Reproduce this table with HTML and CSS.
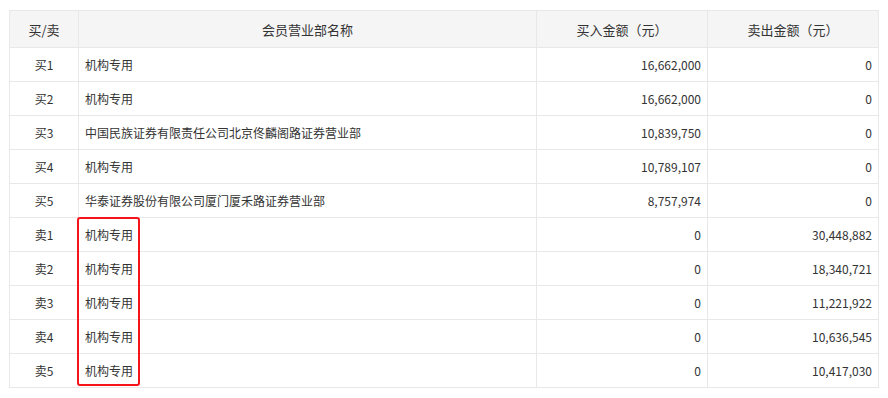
FILE: index.html
```html
<!DOCTYPE html>
<html lang="zh">
<head>
<meta charset="utf-8">
<link rel="stylesheet" href="styles.css">
</head>
<body>
<div class="wrap">
  <table class="grid">
    <colgroup>
      <col class="c1"><col class="c2"><col class="c3"><col class="c4">
    </colgroup>
    <thead>
      <tr><th>买/卖</th><th>会员营业部名称</th><th>买入金额（元）</th><th>卖出金额（元）</th></tr>
    </thead>
    <tbody>
      <tr><td class="side">买1</td><td class="name">机构专用</td><td class="num">16,662,000</td><td class="num">0</td></tr>
      <tr><td class="side">买2</td><td class="name">机构专用</td><td class="num">16,662,000</td><td class="num">0</td></tr>
      <tr><td class="side">买3</td><td class="name">中国民族证券有限责任公司北京佟麟阁路证券营业部</td><td class="num">10,839,750</td><td class="num">0</td></tr>
      <tr><td class="side">买4</td><td class="name">机构专用</td><td class="num">10,789,107</td><td class="num">0</td></tr>
      <tr><td class="side">买5</td><td class="name">华泰证券股份有限公司厦门厦禾路证券营业部</td><td class="num">8,757,974</td><td class="num">0</td></tr>
      <tr><td class="side">卖1</td><td class="name">机构专用</td><td class="num">0</td><td class="num">30,448,882</td></tr>
      <tr><td class="side">卖2</td><td class="name">机构专用</td><td class="num">0</td><td class="num">18,340,721</td></tr>
      <tr><td class="side">卖3</td><td class="name">机构专用</td><td class="num">0</td><td class="num">11,221,922</td></tr>
      <tr><td class="side">卖4</td><td class="name">机构专用</td><td class="num">0</td><td class="num">10,636,545</td></tr>
      <tr><td class="side">卖5</td><td class="name">机构专用</td><td class="num">0</td><td class="num">10,417,030</td></tr>
    </tbody>
  </table>
  <div class="highlight"></div>
</div>
</body>
</html>
```
FILE: styles.css
```css
html, body {
  margin: 0;
  padding: 0;
  background: #fff;
}
body {
  font-family: "Microsoft YaHei", "Noto Sans CJK SC", "Noto Sans", sans-serif;
  color: #333;
}
.wrap {
  position: relative;
  width: 870px;
  margin: 10px 0 0 9px;
}
.grid {
  width: 870px;
  table-layout: fixed;
  border-collapse: collapse;
  font-size: 12px;
}
.c1 { width: 69px; }
.c2 { width: 458px; }
.c3 { width: 171px; }
.c4 { width: 171px; }
.grid th, .grid td {
  border: 1px solid #e8e8e8;
  padding: 0 6px;
  white-space: nowrap;
  overflow: hidden;
}
.grid th {
  background: #f5f5f5;
  height: 36px;
  font-size: 13px;
  font-weight: normal;
  text-align: center;
  color: #333;
}
.grid td {
  height: 33px;
}
.side { text-align: center; }
.name { text-align: left; }
.num { text-align: right; }
.highlight {
  position: absolute;
  left: 68px;
  top: 207px;
  width: 59px;
  height: 165px;
  border: 2.5px solid #f5141a;
  border-radius: 3px;
}
```
